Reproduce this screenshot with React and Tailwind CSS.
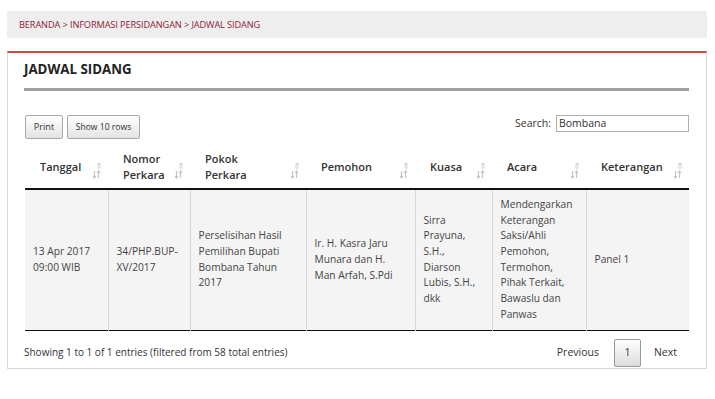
import React from 'react';

function SortIcon() {
  return (
    <svg width="10" height="18" viewBox="0 0 10 18" className="shrink-0">
      <polygon points="7,1 4.5,4.5 9.5,4.5" fill="#d4d4d4" />
      <polygon points="4.5,5.5 9.5,5.5 7,9" fill="#e2e2e2" />
      <line x1="2.5" y1="10" x2="2.5" y2="17" stroke="#c4c4c4" strokeWidth="1.2" />
      <polyline points="1,15 2.5,17 4,15" fill="none" stroke="#c4c4c4" strokeWidth="1.1" />
      <line x1="6.5" y1="10" x2="6.5" y2="17" stroke="#c4c4c4" strokeWidth="1.2" />
      <polyline points="5,12 6.5,10 8,12" fill="none" stroke="#c4c4c4" strokeWidth="1.1" />
    </svg>
  );
}

const columns = [
  { label: ['Tanggal'], width: 'w-[83px]' },
  { label: ['Nomor', 'Perkara'], width: 'w-[82px]' },
  { label: ['Pokok', 'Perkara'], width: 'w-[116px]' },
  { label: ['Pemohon'], width: 'w-[109px]' },
  { label: ['Kuasa'], width: 'w-[77px]' },
  { label: ['Acara'], width: 'w-[94px]' },
  { label: ['Keterangan'], width: 'w-[103px]' },
];

const row = [
  ['13 Apr 2017', '09:00 WIB'],
  ['34/PHP.BUP-', 'XV/2017'],
  ['Perselisihan Hasil', 'Pemilihan Bupati', 'Bombana Tahun', '2017'],
  ['Ir. H. Kasra Jaru', 'Munara dan H.', 'Man Arfah, S.Pdi'],
  ['Sirra', 'Prayuna,', 'S.H.,', 'Diarson', 'Lubis, S.H.,', 'dkk'],
  ['Mendengarkan', 'Keterangan', 'Saksi/Ahli', 'Pemohon,', 'Termohon,', 'Pihak Terkait,', 'Bawaslu dan', 'Panwas'],
  ['Panel 1'],
];

function Lines({ lines }) {
  return lines.map((l, i) => (
    <React.Fragment key={i}>
      {l}
      {i < lines.length - 1 && <br />}
    </React.Fragment>
  ));
}

export default function App() {
  return (
    <div className="w-[715px] h-[399px] bg-white pt-[11px] pl-[7px] pr-[8px] font-['Open_Sans',sans-serif] text-[#333]">
      {/* breadcrumb */}
      <div className="h-[27px] bg-[#eeeeee] flex items-center px-[12px] text-[9.2px] text-[#8e2236] tracking-[-0.1px]">
        BERANDA &gt; INFORMASI PERSIDANGAN &gt; JADWAL SIDANG
      </div>

      <div className="mt-[13px] h-[318px] border border-[#d8d8d8] border-t-2 border-t-[#cc4a44] pl-[16px] pr-[17px]">
        <div className="h-[38px] pb-[1px] flex items-center text-[13.3px] font-bold text-[#222] border-b-[3px] border-[#a0a0a0]">
          JADWAL SIDANG
        </div>

        <div className="mt-[24px] flex items-start justify-between pl-[1px]">
          <div className="flex gap-[4px]">
            <button className="h-[24px] w-[38px] border border-[#a8a8a8] rounded-[2px] bg-gradient-to-b from-white to-[#e4e4e4] text-[9.2px] text-[#333]">
              Print
            </button>
            <button className="h-[24px] w-[73px] border border-[#a8a8a8] rounded-[2px] bg-gradient-to-b from-white to-[#e4e4e4] text-[8.6px] text-[#333]">
              Show 10 rows
            </button>
          </div>
          <div className="flex items-center gap-[5px] text-[10.5px]">
            <span>Search:</span>
            <div className="h-[17px] w-[133px] border border-[#b0b0b0] bg-white px-[2px] flex items-center text-[10.5px] text-[#333]">
              Bombana
            </div>
          </div>
        </div>

        <table className="mt-[6px] ml-[1px] w-[664px] table-fixed border-collapse">
          <thead>
            <tr className="h-[44px] border-b-2 border-[#111]">
              {columns.map((c, i) => (
                <th key={i} className={`${c.width} p-0 text-left font-semibold text-[11px] leading-[16px] text-[#333]`}>
                  <div className="flex items-center justify-between pl-[15px] pr-[6px]">
                    <span><Lines lines={c.label} /></span>
                    <span className="mt-[6px]"><SortIcon /></span>
                  </div>
                </th>
              ))}
            </tr>
          </thead>
          <tbody>
            <tr className="h-[141px] bg-[#f4f4f4] border-b border-[#111]">
              {row.map((lines, i) => (
                <td
                  key={i}
                  className={`align-middle pl-[8px] pr-[4px] text-[10.2px] leading-[15.7px] text-[#444] ${i > 0 ? 'border-l border-[#d6d6d6]' : ''}`}
                >
                  <Lines lines={lines} />
                </td>
              ))}
            </tr>
          </tbody>
        </table>

        <div className="mt-[8px] flex items-center justify-between h-[28px]">
          <span className="text-[10px] text-[#333]">
            Showing 1 to 1 of 1 entries (filtered from 58 total entries)
          </span>
          <div className="flex items-center text-[10.5px] text-[#333] mr-[12px]">
            <span className="mr-[15px]">Previous</span>
            <span className="h-[28px] w-[27px] border border-[#999] rounded-[2px] bg-gradient-to-b from-white to-[#dcdcdc] flex items-center justify-center">
              1
            </span>
            <span className="ml-[13px]">Next</span>
          </div>
        </div>
      </div>
    </div>
  );
}
